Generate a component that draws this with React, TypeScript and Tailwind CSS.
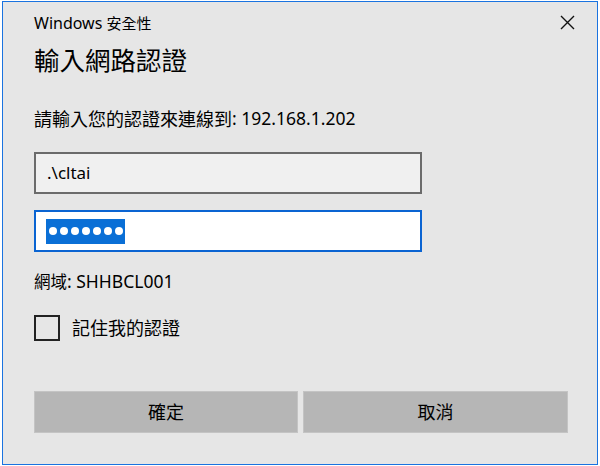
import React from 'react';

const font = { fontFamily: '"Noto Sans", "Noto Sans CJK TC", sans-serif' };

const CloseIcon: React.FC = () => (
  <svg width="15" height="15" viewBox="0 0 15 15" className="block">
    <path d="M1 1 L14 14 M14 1 L1 14" stroke="#111" strokeWidth="1.4" fill="none" />
  </svg>
);

export default function App() {
  return (
    <div className="w-[600px] h-[466px] bg-white pt-[1px] px-[2px] pb-[1px]" style={font}>
      <div className="h-full border border-[#1a73e0] bg-[#e6e6e6] flex flex-col pl-[31px] pr-[29px] text-black">
        {/* header */}
        <div className="h-[41px] flex items-center justify-between">
          <div className="leading-none">
            <span className="text-[16px]">Windows </span>
            <span className="text-[15px]">安全性</span>
          </div>
          <div className="mr-[-7px]">
            <CloseIcon />
          </div>
        </div>

        <div className="h-[36px] flex items-center text-[25.5px] leading-none">輸入網路認證</div>

        <div className="mt-[28px] h-[24px] flex items-center leading-none">
          <span className="text-[18px]">請輸入您的認證來連線到</span>
          <span className="text-[17.5px]">: 192.168.1.202</span>
        </div>

        {/* username */}
        <div className="mt-[21px] w-[388px] h-[42px] border-2 border-[#6b6b6b] bg-[#f0f0f0] flex items-center pl-[11px] text-[17px]">
          .\cltai
        </div>

        {/* password */}
        <div className="mt-[16px] w-[388px] h-[42px] border-2 border-[#0a64d2] bg-white flex items-center pl-[10px]">
          <div className="h-[25px] w-[79px] bg-[#0a6fd6] flex items-center gap-[3px] pl-[3px]">
            {[0, 1, 2, 3, 4, 5, 6].map((i) => (
              <span key={i} className="w-[8px] h-[8px] rounded-full bg-white" />
            ))}
          </div>
        </div>

        <div className="mt-[18px] h-[24px] flex items-center leading-none">
          <span className="text-[16.5px]">網域</span>
          <span className="text-[17.5px]">: SHHBCL001</span>
        </div>

        {/* remember */}
        <div className="mt-[21px] h-[26px] flex items-center gap-[12px]">
          <div className="w-[26px] h-[26px] border-2 border-[#222]" />
          <span className="text-[18px] leading-none">記住我的認證</span>
        </div>

        {/* buttons */}
        <div className="mt-[50px] flex gap-[5px]">
          <button className="w-[264px] h-[42px] bg-[#b6b6b6] border border-[#c4c4c4] text-[18px] text-black">
            確定
          </button>
          <button className="w-[265px] h-[42px] bg-[#b6b6b6] border border-[#c4c4c4] text-[18px] text-black">
            取消
          </button>
        </div>
      </div>
    </div>
  );
}
